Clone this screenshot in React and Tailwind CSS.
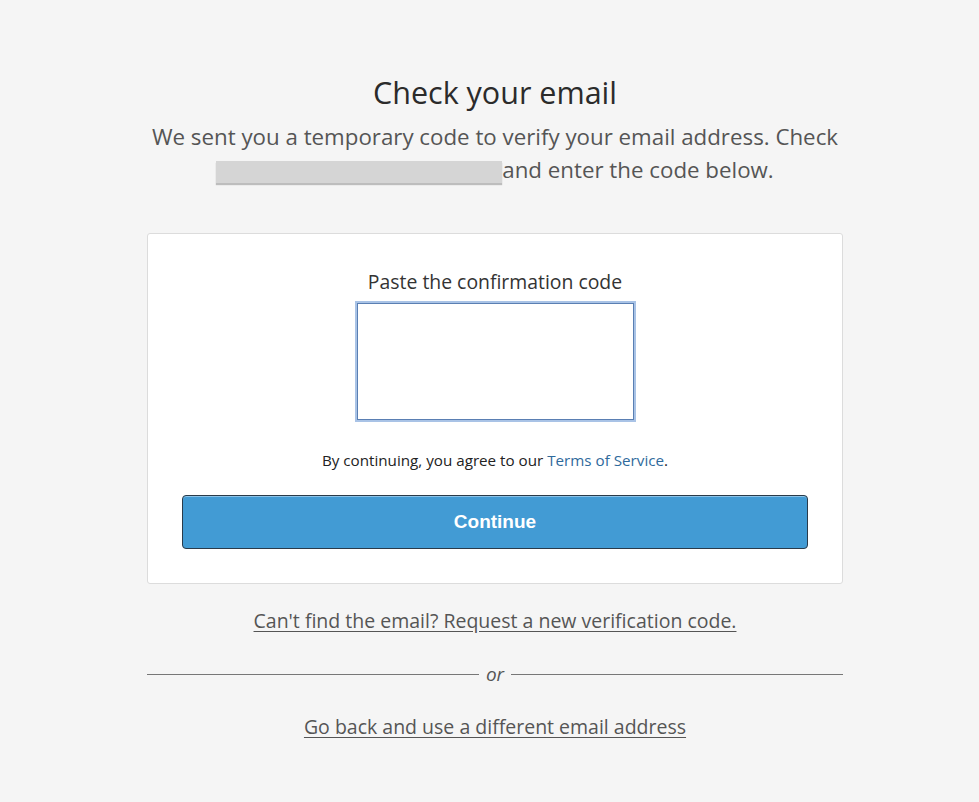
export default function App() {
  return (
    <div
      className="min-h-screen w-full bg-[#f5f5f5] pt-[72px] text-[#333]"
      style={{ fontFamily: '"Open Sans", "Noto Sans", sans-serif' }}
    >
      <div className="ml-[147px] w-[696px]">
        <h1 className="text-center text-[30.5px] leading-[40px] text-[#2b2b2b]">Check your email</h1>
        <p className="mt-[8px] text-center text-[22.3px] leading-[33px] text-[#555]">
          We sent you a temporary code to verify your email address. Check{" "}
          <span className="inline-block h-[22px] w-[286px] translate-y-[5px] bg-[#d5d5d5] shadow-[0_2px_1px_#bdbdbd] align-baseline"></span>
          and enter the code below.
        </p>

        <div className="mt-[47px] rounded-[3px] border border-[#dcdcdc] bg-white px-[34px] pb-[34px] pt-[35px]">
          <div className="flex flex-col items-center">
            <label className="text-[19.4px] leading-[26px] text-[#333]">Paste the confirmation code</label>
            <textarea
              className="mt-[8px] h-[117px] w-[277px] resize-none border border-[#5a7fb3] bg-white outline-none ring-2 ring-[#a9c3e6]"
            />
            <p className="mt-[30px] text-[15.2px] leading-[20px] text-[#222]">
              By continuing, you agree to our{" "}
              <a className="text-[#2f6a9c]">Terms of Service</a>.
            </p>
          </div>
          <button
            type="button"
            className="mt-[25px] flex h-[54px] w-full items-center justify-center rounded-[4px] border border-[#2a3b4a] bg-[#429bd4] text-[19px] font-bold text-white shadow-[inset_0_1px_0_#8cc3e8]"
            style={{ fontFamily: '"Liberation Sans", Arial, sans-serif' }}
          >
            Continue
          </button>
        </div>

        <p className="mt-[24px] text-center text-[19.5px] leading-[26px]">
          <a className="text-[#555] underline underline-offset-[3px]">Can't find the email? Request a new verification code.</a>
        </p>

        <div className="mt-[28px] flex items-center gap-[7px]">
          <div className="h-px flex-1 bg-[#777]"></div>
          <span className="text-[19px] italic leading-[24px] text-[#555]">or</span>
          <div className="h-px flex-1 bg-[#777]"></div>
        </div>

        <p className="mt-[28px] text-center text-[19.5px] leading-[26px]">
          <a className="text-[#555] underline underline-offset-[3px]">Go back and use a different email address</a>
        </p>
      </div>
    </div>
  );
}
